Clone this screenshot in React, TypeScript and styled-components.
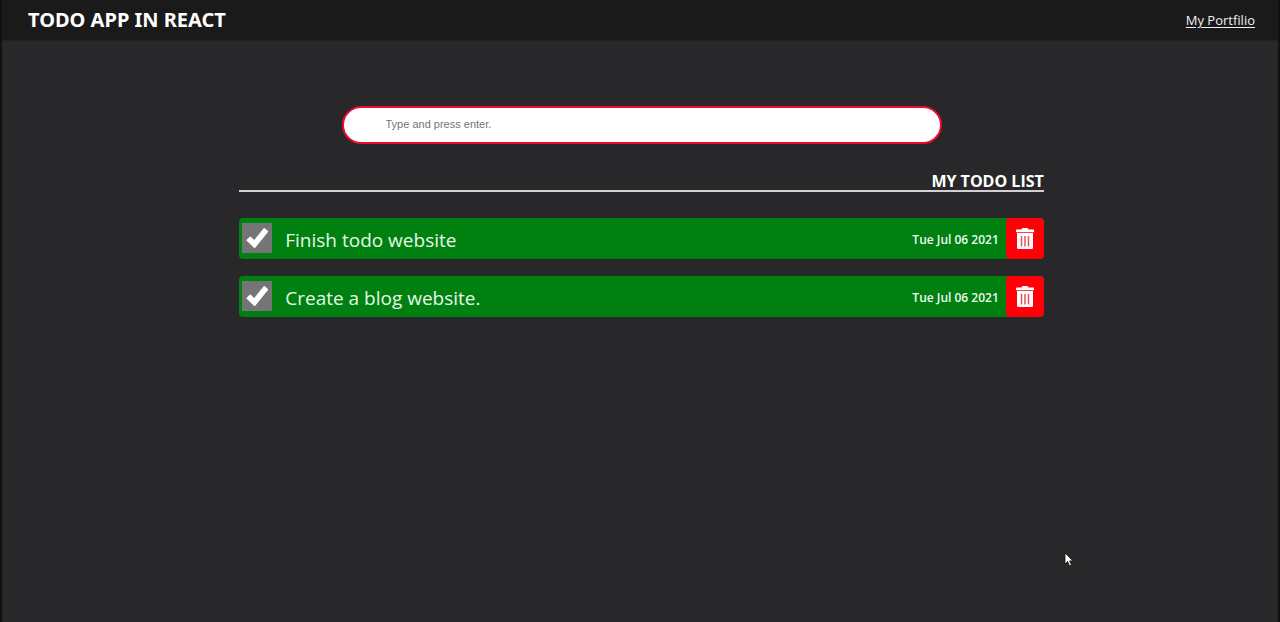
import React, { useState } from "react";
import styled, { createGlobalStyle } from "styled-components";

const GlobalStyle = createGlobalStyle`
  *, *::before, *::after { box-sizing: border-box; }
  html { min-height: 100%; background: #28282a; }
  body {
    margin: 0;
    min-height: 100vh;
    font-family: "Open Sans", "Noto Sans", sans-serif;
    color: #fff;
  }
`;

const Page = styled.div`
  min-height: 100vh;
  border: solid #101010;
  border-width: 0 2px;
  background: #28282a;
`;

const Header = styled.header`
  display: flex;
  align-items: center;
  justify-content: space-between;
  height: 41px;
  padding: 0 23px 0 26px;
  background: #1a1a1a;
  border-bottom: 1px solid #212121;
`;

const Brand = styled.h1`
  margin: 0;
  font-family: "Noto Sans", "Open Sans", sans-serif;
  font-size: 20px;
  line-height: 24px;
  font-weight: 700;
`;

const PortfolioLink = styled.a`
  color: #f0f0f0;
  font-size: 13px;
  line-height: 20px;
  text-underline-offset: 2px;
`;

const Content = styled.div`
  padding: 65px 0 0 3px;
`;

const Main = styled.main`
  width: 63.2%;
  margin: 0 auto;
`;

const EntryForm = styled.form`
  display: flex;
  justify-content: center;
`;

const EntryInput = styled.input`
  width: 600px;
  max-width: 100%;
  height: 38px;
  padding: 0 42px 2px;
  border: 2px solid #ec0a2c;
  border-radius: 19px;
  background: #fff;
  color: #222;
  font: 11px/16px "Liberation Sans", Arial, sans-serif;
  outline: none;
  &::placeholder { color: #757575; opacity: 1; }
`;

const ListTitle = styled.h2`
  margin: 29px 0 26px;
  border-bottom: 2px solid #d4d0d2;
  text-align: right;
  font-size: 16px;
  line-height: 17px;
  font-weight: 700;
`;

const TodoList = styled.ul`
  display: flex;
  flex-direction: column;
  gap: 17px;
  margin: 0;
  padding: 0;
  list-style: none;
`;

const TodoRow = styled.li`
  display: flex;
  align-items: center;
  height: 41px;
  border-radius: 4px;
  background: #008011;
  overflow: hidden;
`;

const TodoLabel = styled.label`
  display: flex;
  flex: 1;
  align-items: center;
  gap: 13px;
  padding-left: 3px;
  cursor: pointer;
`;

const CheckFrame = styled.span`
  display: grid;
  width: 30px;
  height: 30px;
  margin-bottom: 1px;
  background: #757575;
  & > * { grid-area: 1 / 1; }
`;

const Checkbox = styled.input`
  appearance: none;
  width: 30px;
  height: 30px;
  margin: 0;
  & + svg { visibility: hidden; pointer-events: none; }
  &:checked + svg { visibility: visible; }
`;

const TodoText = styled.span<{ $done: boolean }>`
  padding-top: 3px;
  font-size: 19px;
  line-height: 26px;
  color: ${(p) => (p.$done ? "#e6f8e6" : "#fff")};
`;

const DateText = styled.time`
  margin-right: 7px;
  padding-top: 2px;
  font-size: 12px;
  line-height: 16px;
  font-weight: 600;
  color: #effaef;
`;

const DeleteButton = styled.button`
  display: flex;
  align-items: center;
  justify-content: center;
  width: 38px;
  height: 100%;
  padding: 0;
  border: 0;
  border-radius: 4px;
  background: #ff0009;
  color: #fff;
  cursor: pointer;
`;

const Pointer = styled.svg`
  position: absolute;
  left: 1064px;
  top: 552px;
  pointer-events: none;
`;

const CheckIcon = () => (
  <svg width="30" height="30" viewBox="0 0 30 30" aria-hidden="true">
    <path
      fill="#fff"
      stroke="#fff"
      strokeWidth="1.4"
      strokeLinejoin="round"
      d="M5.200 17.300 8.300 14.200 12.200 18.100 22.300 5.700 25.400 8.600 12.700 24.400Z"
    />
  </svg>
);

const TrashIcon = () => (
  <svg width="20" height="22" viewBox="0 0 20 22" aria-hidden="true">
    <path fill="currentColor" d="M6.500 1.500Q6.500 0 8 0h4q1.500 0 1.500 1.500h4.700q.8 0 .8.8v1.900H1V2.300q0-.8.8-.8Z" />
    <path fill="currentColor" d="M2 5h16V19.500q0 1.500-1.500 1.500h-13Q2 21 2 19.500Z" />
    <path d="M6.500 8v10.500M10 8v10.500M13.500 8v10.500" stroke="#e0555c" strokeWidth="1.500" />
  </svg>
);

interface Todo {
  id: number;
  text: string;
  date: string;
  done: boolean;
}

const initialTodos: Todo[] = [
  { id: 1, text: "Finish todo website", date: "Tue Jul 06 2021", done: true },
  { id: 2, text: "Create a blog website.", date: "Tue Jul 06 2021", done: true },
];

export default function App() {
  const [todos, setTodos] = useState(initialTodos);
  const [draft, setDraft] = useState("");

  const addTodo = (e: React.FormEvent) => {
    e.preventDefault();
    if (!draft.trim()) return;
    setTodos([...todos, { id: Date.now(), text: draft, date: new Date().toDateString(), done: false }]);
    setDraft("");
  };

  const toggle = (id: number) =>
    setTodos(todos.map((t) => (t.id === id ? { ...t, done: !t.done } : t)));

  return (
    <>
      <GlobalStyle />
      <Page>
        <Header>
          <Brand>TODO APP IN REACT</Brand>
          <PortfolioLink href="#portfolio">My Portfilio</PortfolioLink>
        </Header>
        <Content>
          <Main>
            <EntryForm onSubmit={addTodo}>
              <EntryInput
                type="text"
                aria-label="New todo"
                placeholder="Type and press enter."
                value={draft}
                onChange={(e) => setDraft(e.target.value)}
              />
            </EntryForm>
            <ListTitle>MY TODO LIST</ListTitle>
            <TodoList>
              {todos.map((t) => (
                <TodoRow key={t.id}>
                  <TodoLabel>
                    <CheckFrame>
                      <Checkbox type="checkbox" checked={t.done} onChange={() => toggle(t.id)} />
                      <CheckIcon />
                    </CheckFrame>
                    <TodoText $done={t.done}>{t.text}</TodoText>
                  </TodoLabel>
                  <DateText>{t.date}</DateText>
                  <DeleteButton
                    type="button"
                    aria-label={`Delete ${t.text}`}
                    onClick={() => setTodos(todos.filter((x) => x.id !== t.id))}
                  >
                    <TrashIcon />
                  </DeleteButton>
                </TodoRow>
              ))}
            </TodoList>
          </Main>
        </Content>
      </Page>
      <Pointer width="10" height="15" viewBox="0 0 10 15" aria-hidden="true">
        <path d="M1 1v11l2.600-2.400 1.900 4.200 2-.9-1.900-4h3.400Z" fill="#fff" stroke="#111" strokeWidth=".8" />
      </Pointer>
    </>
  );
}
